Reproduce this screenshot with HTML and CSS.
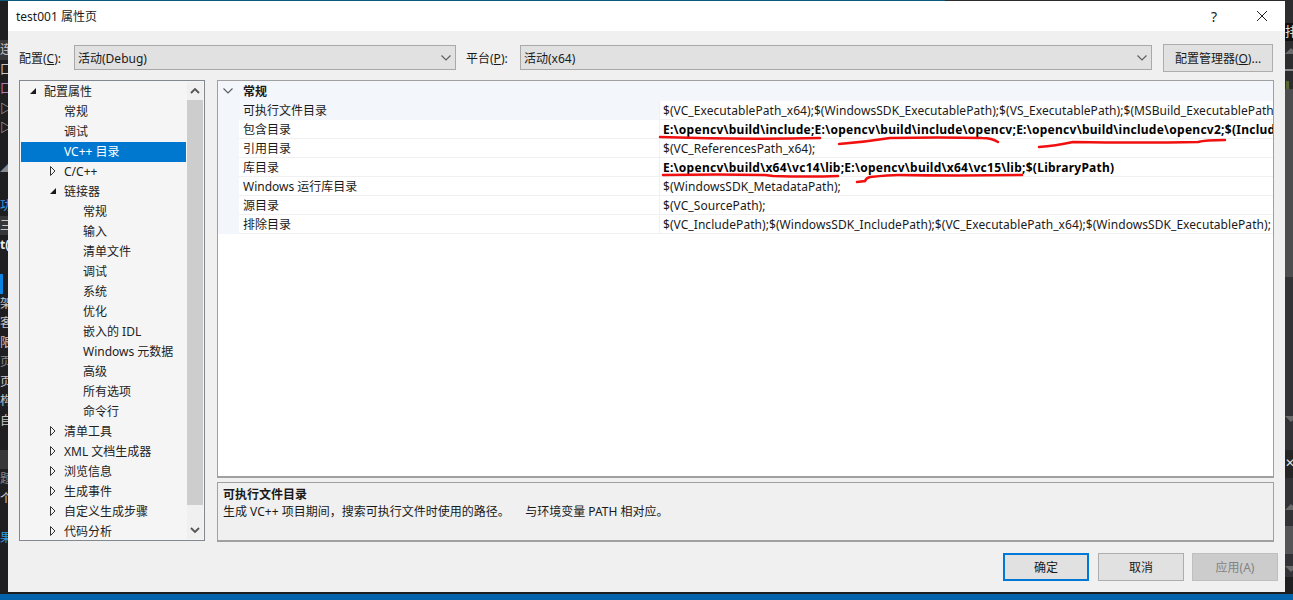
FILE: index.html
```html
<!DOCTYPE html>
<html lang="zh-CN">
<head>
    <meta charset="UTF-8">
    <title>test001 属性页</title>
    <link rel="stylesheet" href="styles.css">
</head>
<body>
    <svg class="defs" width="0" height="0">
        <symbol id="open" viewBox="0 0 8 10"><path d="M1 8h6V2z" fill="#1a1a1a"/></symbol>
        <symbol id="closed" viewBox="0 0 8 10"><path d="M1.5.5 6 5 1.5 9.500z" fill="none" stroke="#333" stroke-width="1"/></symbol>
        <symbol id="chev" viewBox="0 0 10 6"><path d="M.5.5 5 5 9.500.5" fill="none" stroke="#606060" stroke-width="1.200"/></symbol>
    </svg>

    <div class="topline"></div>
    <div class="desktop">
        <div class="strip-left">
            <div></div><div></div>
            <div class="band">连接</div>
            <div>口</div>
            <div class="purple">口</div>
            <div>▷</div>
            <div>▷</div>
            <div></div>
            <div class="dim">◢</div>
            <div></div>
            <div class="blue">功能</div>
            <div class="band">三</div>
            <div class="bold">t(</div>
            <div></div>
            <div class="bar"></div>
            <div>架构</div>
            <div>客户</div>
            <div>限制</div>
            <div class="dim">页面</div>
            <div>页面</div>
            <div>构建</div>
            <div>自定</div>
            <div></div>
            <div class="band"></div>
            <div class="dim">题目</div>
            <div>个人</div>
            <div></div>
            <div class="blue">果</div>
        </div>

        <div class="dialog">
            <div class="titlebar">
                <span class="title">test001 属性页</span>
                <span class="help">?</span>
                <svg class="close" width="10" height="10" viewBox="0 0 10 10"><path d="M0 0 10 10M10 0 0 10" stroke="#222" stroke-width="1"/></svg>
            </div>

            <div class="toolbar">
                <label class="cfg-label">配置(<u>C</u>):</label>
                <div class="combo combo-cfg">活动(Debug)<svg class="chev"><use href="#chev"/></svg></div>
                <label class="plat-label">平台(<u>P</u>):</label>
                <div class="combo combo-plat">活动(x64)<svg class="chev"><use href="#chev"/></svg></div>
                <button class="btn btn-manager">配置管理器(<u>O</u>)...</button>
            </div>

            <div class="main">
                <div class="tree">
                    <div class="tree-rows">
                        <div class="node lv0"><svg class="tw"><use href="#open"/></svg>配置属性</div>
                        <div class="node lv1"><span class="tw"></span>常规</div>
                        <div class="node lv1"><span class="tw"></span>调试</div>
                        <div class="node lv1 selected"><span class="tw"></span>VC++ 目录</div>
                        <div class="node lv1 arrow"><svg class="tw"><use href="#closed"/></svg>C/C++</div>
                        <div class="node lv1 arrow"><svg class="tw"><use href="#open"/></svg>链接器</div>
                        <div class="node lv2"><span class="tw"></span>常规</div>
                        <div class="node lv2"><span class="tw"></span>输入</div>
                        <div class="node lv2"><span class="tw"></span>清单文件</div>
                        <div class="node lv2"><span class="tw"></span>调试</div>
                        <div class="node lv2"><span class="tw"></span>系统</div>
                        <div class="node lv2"><span class="tw"></span>优化</div>
                        <div class="node lv2"><span class="tw"></span>嵌入的 IDL</div>
                        <div class="node lv2"><span class="tw"></span>Windows 元数据</div>
                        <div class="node lv2"><span class="tw"></span>高级</div>
                        <div class="node lv2"><span class="tw"></span>所有选项</div>
                        <div class="node lv2"><span class="tw"></span>命令行</div>
                        <div class="node lv1 arrow"><svg class="tw"><use href="#closed"/></svg>清单工具</div>
                        <div class="node lv1 arrow"><svg class="tw"><use href="#closed"/></svg>XML 文档生成器</div>
                        <div class="node lv1 arrow"><svg class="tw"><use href="#closed"/></svg>浏览信息</div>
                        <div class="node lv1 arrow"><svg class="tw"><use href="#closed"/></svg>生成事件</div>
                        <div class="node lv1 arrow"><svg class="tw"><use href="#closed"/></svg>自定义生成步骤</div>
                        <div class="node lv1 arrow"><svg class="tw"><use href="#closed"/></svg>代码分析</div>
                    </div>
                    <div class="scrollbar">
                        <svg class="sb-up" viewBox="0 0 10 6"><path d="M1 5 5 1l4 4" fill="none" stroke="#555" stroke-width="1.800"/></svg>
                        <div class="thumb"></div>
                        <svg class="sb-down" viewBox="0 0 10 6"><path d="M1 1l4 4 4-4" fill="none" stroke="#555" stroke-width="1.800"/></svg>
                    </div>
                </div>

                <div class="right">
                    <div class="grid">
                        <div class="grid-head"><svg class="head-chev"><use href="#chev"/></svg><b>常规</b></div>
                        <div class="row first"><span class="gutter"></span><span class="name">可执行文件目录</span><span class="value">$(VC_ExecutablePath_x64);$(WindowsSDK_ExecutablePath);$(VS_ExecutablePath);$(MSBuild_ExecutablePath);$(SystemRoot)\SysWow64</span></div>
                        <div class="row"><span class="gutter"></span><span class="name">包含目录</span><span class="value strong">E:\opencv\build\include;E:\opencv\build\include\opencv;E:\opencv\build\include\opencv2;$(IncludePath)</span></div>
                        <div class="row"><span class="gutter"></span><span class="name">引用目录</span><span class="value">$(VC_ReferencesPath_x64);</span></div>
                        <div class="row"><span class="gutter"></span><span class="name">库目录</span><span class="value strong">E:\opencv\build\x64\vc14\lib;E:\opencv\build\x64\vc15\lib;$(LibraryPath)</span></div>
                        <div class="row"><span class="gutter"></span><span class="name">Windows 运行库目录</span><span class="value">$(WindowsSDK_MetadataPath);</span></div>
                        <div class="row"><span class="gutter"></span><span class="name">源目录</span><span class="value">$(VC_SourcePath);</span></div>
                        <div class="row"><span class="gutter"></span><span class="name">排除目录</span><span class="value">$(VC_IncludePath);$(WindowsSDK_IncludePath);$(VC_ExecutablePath_x64);$(WindowsSDK_ExecutablePath);</span></div>
                    </div>
                    <div class="desc">
                        <b>可执行文件目录</b>
                        <p>生成 VC++ 项目期间，搜索可执行文件时使用的路径。 &nbsp;&nbsp;&nbsp;&nbsp;与环境变量 PATH 相对应。</p>
                    </div>
                </div>
            </div>

            <div class="footer">
                <button class="btn btn-ok">确定</button>
                <button class="btn">取消</button>
                <button class="btn btn-off">应用(A)</button>
            </div>
        </div>

        <div class="strip-right">
            <div class="r1"></div>
            <div class="r2">排</div>
            <div class="r3"><span class="tri-up"></span></div>
            <div class="r4"></div>
            <div class="r5"><span class="olive"></span></div>
            <div class="r6"></div>
            <div class="r7"><span class="tri-down"></span></div>
            <div class="r8">✕</div>
            <div class="r9"></div>
            <div class="r10"><span class="tri-up"></span></div>
            <div class="r11"></div>
            <div class="r12"><span class="tri-down"></span></div>
            <div class="r13"></div>
        </div>
    </div>
    <div class="taskbar"></div>

    <!-- red pen marks drawn over the screenshot -->
    <svg class="marks" width="1293" height="600" viewBox="0 0 1293 600">
        <path d="M660 137Q740 140 820 138"/>
        <path d="M839 144Q865 142 890 138Q940 137 982 138Q992 138 998 142"/>
        <path d="M1039 147Q1055 146 1073 142Q1140 143 1198 142Q1205 140 1225 140"/>
        <path d="M663 175Q720 174 765 175L773 176Q810 177 838 176"/>
        <path d="M857 182L865 181Q866 178 870 177Q890 175 898 175Q960 176 1022 175"/>
    </svg>
</body>
</html>
```

FILE: styles.css
```css
* {
    box-sizing: border-box;
}
body {
    margin: 0;
    height: 600px;
    overflow: hidden;
    background-color: #1e1e1e;
    font-family: "Noto Sans", "Noto Sans CJK SC", sans-serif;
    font-size: 12px;
    color: #1a1a1a;
}
b {
    font-weight: 700;
}
u {
    text-underline-offset: 1px;
}
.defs {
    position: absolute;
}
.topline {
    height: 1px;
    background: linear-gradient(to right, #0a5a7c 0, #0a5a7c 945px, #2d2d30 945px);
}
.desktop {
    display: flex;
    height: 591px;
}
.taskbar {
    height: 8px;
    border-top: 2px solid #1e1e1e;
    background-color: #0563ab;
}

/* what is left of the editor behind the dialog */
.strip-left {
    width: 8px;
    overflow: hidden;
    background-color: #1f1f21;
    color: #c8c8c8;
    line-height: 19.500px;
    white-space: nowrap;
}
.strip-left div {
    height: 19.500px;
    overflow: hidden;
}
.strip-left .band {
    background-color: #37373a;
}
.strip-left .blue {
    color: #2f9be8;
}
.strip-left .purple {
    color: #b07cc0;
}
.strip-left .dim {
    color: #8a8a8a;
}
.strip-left .bold {
    font-weight: 700;
    color: #eee;
}
.strip-left .bar {
    width: 3px;
    background-color: #0a84e0;
}
.strip-right {
    width: 8px;
    display: flex;
    flex-direction: column;
    overflow: hidden;
    background-color: #2d2d30;
    color: #ddd;
}
.r1 { height: 22px; }
.r2 { height: 18px; background-color: #111; line-height: 17px; font-size: 13px; overflow: hidden; }
.r3 { height: 28px; padding-top: 7px; }
.r4 { height: 2px; background-color: #8a8a8a; }
.r5 { height: 18px; padding-top: 10px; }
.r6 { height: 188px; background-color: #4d4d50; }
.r7 { height: 173px; padding-top: 139px; background-color: #333337; }
.r8 { height: 28px; line-height: 26px; background-color: #252526; overflow: hidden; }
.r9 { height: 18px; background-color: #333337; }
.r10 { height: 30px; padding-top: 8px; background-color: #333337; }
.r11 { height: 28px; background-color: #555558; }
.r12 { height: 23px; padding-top: 12px; background-color: #333337; }
.r13 { flex: 1; background-color: #1f1f21; }
.tri-up, .tri-down {
    display: block;
    width: 0;
    border-left: 6px solid transparent;
    border-right: 6px solid transparent;
}
.tri-up {
    border-bottom: 6px solid #6a6a6a;
}
.tri-down {
    border-top: 6px solid #6a6a6a;
}
.olive {
    display: block;
    width: 3px;
    height: 8px;
    margin-left: 1px;
    background-color: #55662f;
}

/* dialog */
.dialog {
    width: 1277px;
    display: flex;
    flex-direction: column;
    background-color: #f0f0f0;
}
.titlebar {
    height: 30px;
    display: flex;
    align-items: center;
    padding-left: 8px;
    background-color: #fff;
}
.title {
    flex: 1;
}
.help {
    font-size: 14px;
    margin-right: 40px;
}
.close {
    margin-right: 18px;
}
.toolbar {
    display: flex;
    align-items: center;
    height: 28px;
    margin-top: 13px;
    padding-left: 11px;
}
.cfg-label {
    width: 55px;
    margin-bottom: 1px;
}
.plat-label {
    width: 54px;
    margin-left: 10px;
    margin-bottom: 1px;
}
.combo {
    height: 25px;
    display: flex;
    align-items: center;
    justify-content: space-between;
    margin-bottom: 1px;
    padding: 0 4px 0 3px;
    background-color: #e1e1e1;
    border: 1px solid #a9a9a9;
}
.combo-cfg {
    width: 382px;
}
.combo-plat {
    width: 632px;
}
.chev {
    width: 10px;
    height: 6px;
}
.btn {
    width: 86px;
    height: 28px;
    padding: 0;
    background-color: #e1e1e1;
    border: 1px solid #adadad;
    font: inherit;
    color: #1a1a1a;
}
.btn-manager {
    width: 110px;
    margin-left: 11px;
}
.btn-ok {
    margin-right: 1px;
    border: 2px solid #0078d7;
}
.btn-off {
    background-color: #cccccc;
    border-color: #bfbfbf;
    color: #838383;
}

/* category tree and property grid */
.main {
    display: flex;
    gap: 12px;
    height: 463px;
    margin-top: 8px;
    padding: 0 11px;
}
.tree {
    width: 186px;
    height: 461px;
    display: flex;
    padding: 1px;
    overflow: hidden;
    background-color: #f5f5f5;
    border: 1px solid #828790;
}
.tree-rows {
    width: 165px;
    color: #222;
}
.node {
    height: 20px;
    display: flex;
    align-items: center;
    padding-bottom: 2px;
    white-space: nowrap;
}
.tw {
    flex: none;
    width: 8px;
    height: 10px;
    margin-right: 7px;
}
.lv0 {
    padding-left: 8px;
}
.lv1 {
    padding-left: 28px;
}
.lv2 {
    padding-left: 47px;
}
.selected {
    background-color: #0078cf;
    color: #fff;
}
.scrollbar {
    width: 16px;
    margin-left: 1px;
    display: flex;
    flex-direction: column;
    align-items: center;
    background-color: #f0f0f0;
}
.sb-up, .sb-down {
    flex: none;
    width: 10px;
    height: 6px;
}
.sb-up {
    margin: 6px 0 6px;
}
.sb-down {
    margin-top: 22px;
}
.thumb {
    width: 16px;
    height: 405px;
    background-color: #cdcdcd;
}
.right {
    flex: 1;
    display: flex;
    flex-direction: column;
    gap: 4px;
}
.grid {
    height: 398px;
    background-color: #fff;
    border: 1px solid #a0a0a0;
    border-bottom-width: 2px;
}
.grid-head {
    height: 20px;
    display: flex;
    align-items: center;
    padding-left: 5px;
    background-color: #f3f6fb;
}
.head-chev {
    width: 10px;
    height: 6px;
    margin-right: 10px;
}
.row {
    height: 19px;
    display: grid;
    grid-template-columns: 21px 420px 1fr;
    line-height: 18px;
    white-space: nowrap;
}
.gutter {
    background-color: #f3f6fb;
}
.name, .value {
    padding-top: 1px;
    border-bottom: 1px solid #f0f0f0;
    overflow: hidden;
}
.name {
    padding-left: 4px;
}
.row.first .name {
    background-color: #f3f6fb;
    border-bottom-color: #f3f6fb;
}
.value {
    padding-left: 3px;
    border-left: 1px solid #f0f0f0;
    letter-spacing: 0.06px;
}
.strong {
    font-weight: 700;
    color: #000;
    letter-spacing: 0.26px;
}
.desc {
    height: 60px;
    padding: 3px 5px;
    line-height: 17px;
    border: 1px solid #a0a0a0;
    border-bottom-width: 2px;
}
.desc b {
    display: block;
}
.desc p {
    margin: 0;
}
.footer {
    display: flex;
    justify-content: flex-end;
    gap: 8px;
    margin-top: 10px;
    padding-right: 7px;
}
.marks {
    position: absolute;
    top: 0;
    left: 0;
    pointer-events: none;
}
.marks path {
    fill: none;
    stroke: #f01010;
    stroke-width: 2.500;
    stroke-linecap: round;
}
```
